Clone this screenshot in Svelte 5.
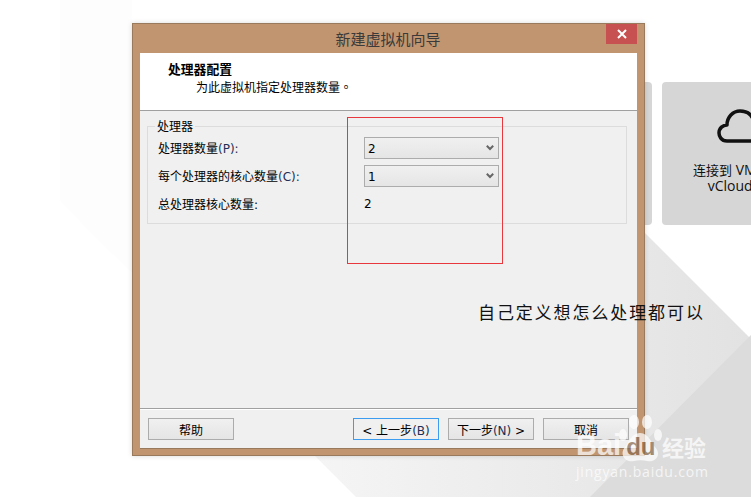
<script>
	let fields = [
		{ label: '处理器数量', key: '(P):', value: '2' },
		{ label: '每个处理器的核心数量', key: '(C):', value: '1' }
	]
</script>

<main class="desktop">
	<svg class="backdrop" width="751" height="497" aria-hidden="true">
		<defs>
			<linearGradient id="fade" x1="0" x2="1" y1="0" y2="0">
				<stop offset="0" stop-color="#f5f5f5" />
				<stop offset="1" stop-color="#e2e2e2" />
			</linearGradient>
		</defs>
		<polygon points="60,0 132,0 132,272 98,240 60,200" fill="#fdfdfd" />
		<polygon points="315,456 645,233 751,339 751,497 356,497" fill="url(#fade)" />
		<polygon points="751,335 751,497 590,497" fill="#dcdcdc" />
	</svg>

	<div class="tile side"></div>
	<div class="tile cloud">
		<svg width="70" height="40" viewBox="0 0 70 40" fill="none" aria-hidden="true">
			<path
				d="M10 33 C4 33 2 28 2 25 C2 20 6 17 10 17 C10 9 16 3 23 3 C29 3 34 6 36 11 C39 9 43 9 46 11 C49 13 50 16 50 18 C55 17 61 20 61 26 C61 30 58 33 54 33 Z"
				stroke="#111"
				stroke-width="3.5"
				stroke-linejoin="round"
			/>
		</svg>
		<p><span class="cjk">连接到</span> VMware<br />vCloud Air</p>
	</div>

	<section class="window">
		<header class="titlebar">
			<h1>新建虚拟机向导</h1>
			<button class="close" aria-label="关闭">
				<svg width="10" height="10" viewBox="0 0 10 10" aria-hidden="true">
					<path d="M1 1 L9 9 M9 1 L1 9" stroke="#fff" stroke-width="2" />
				</svg>
			</button>
		</header>

		<div class="client">
			<div class="intro">
				<h2>处理器配置</h2>
				<p>为此虚拟机指定处理器数量<span class="stop">。</span></p>
			</div>

			<div class="body">
				<fieldset>
					<legend>处理器</legend>
					{#each fields as field}
						<div class="row">
							<span class="label">{field.label}<span class="key">{field.key}</span></span>
							<div class="select">
								<span class="value">{field.value}</span>
								<svg width="8" height="6" viewBox="0 0 8 6" aria-hidden="true">
									<path d="M0.8 0.8 L4 4 L7.2 0.8" fill="none" stroke="#666" stroke-width="2" />
								</svg>
							</div>
						</div>
					{/each}
					<div class="row total">
						<span class="label">总处理器核心数量:</span>
						<span class="count">2</span>
					</div>
				</fieldset>
			</div>

			<footer class="actions">
				<button class="btn help">帮助</button>
				<button class="btn focus">&lt; 上一步<span class="key">(B)</span></button>
				<button class="btn">下一步<span class="key">(N)</span> &gt;</button>
				<button class="btn">取消</button>
			</footer>
		</div>
	</section>

	<div class="marquee"></div>
	<p class="note">自己定义想怎么处理都可以</p>

	<div class="watermark" aria-hidden="true">
		<svg class="paw" width="46" height="50" viewBox="0 0 46 50">
			<ellipse cx="6" cy="20" rx="4" ry="6" />
			<ellipse cx="17" cy="7" rx="5" ry="7" />
			<ellipse cx="30" cy="7" rx="5" ry="7" />
			<ellipse cx="41" cy="20" rx="4" ry="6" />
			<path d="M23 18 C14 18 12 28 8 32 C2 39 8 48 17 46 C21 45 26 45 30 46 C39 48 45 39 38 32 C34 28 32 18 23 18 Z" />
		</svg>
		<span class="brand">Bai<span class="du">du</span></span>
		<span class="jingyan">经验</span>
		<span class="url">jingyan.baidu.com</span>
	</div>
</main>

<style>
	:global(body) {
		margin: 0;
		background: #fff;
	}

	.desktop {
		position: relative;
		width: 751px;
		height: 497px;
		overflow: hidden;
		background: #fff;
		font-family: 'DejaVu Sans', 'Noto Sans CJK SC', sans-serif;
		font-size: 12px;
		color: #000;
	}

	.backdrop {
		position: absolute;
		left: 0;
		top: 0;
	}

	.tile {
		position: absolute;
		top: 82px;
		height: 143px;
		background: #d6d6d6;
		border-radius: 4px;
	}

	.side {
		left: 560px;
		width: 92px;
	}

	.cloud {
		left: 662px;
		width: 158px;
		display: flex;
		flex-direction: column;
		align-items: center;
		padding-top: 26px;
		box-sizing: border-box;
	}

	.cloud svg {
		margin-left: 22px;
	}

	.cloud p {
		margin: 14px 0 0;
		font-family: 'Open Sans', 'Noto Sans CJK SC', sans-serif;
		font-size: 14px;
		line-height: 16px;
		text-align: center;
		white-space: nowrap;
		color: #111;
	}

	.cjk {
		font-size: 13px;
	}

	.window {
		position: absolute;
		left: 132px;
		top: 23px;
		width: 513px;
		height: 433px;
		box-sizing: border-box;
		display: flex;
		flex-direction: column;
		background: #c09570;
		border: 1px solid #9a7a5c;
		box-shadow: 0 0 5px rgba(0, 0, 0, 0.15);
		padding: 0 7px 6px;
	}

	.titlebar {
		height: 29px;
		flex: none;
		display: flex;
		justify-content: center;
		align-items: center;
		position: relative;
	}

	h1 {
		margin: 0 0 0 -1px;
		font-size: 15px;
		font-weight: 400;
		color: #3a3a3a;
	}

	.close {
		position: absolute;
		right: 0;
		top: 0;
		width: 31px;
		height: 20px;
		border: 0;
		padding: 0;
		background: #c75050;
		display: flex;
		align-items: center;
		justify-content: center;
	}

	.client {
		flex: 1;
		display: flex;
		flex-direction: column;
		background: #f0f0f0;
		border-bottom: 1px solid #9a7a5c;
		min-height: 0;
	}

	.intro {
		height: 57px;
		flex: none;
		background: #fff;
		border-bottom: 1px solid #a0a0a0;
		padding-left: 28px;
		display: flex;
		flex-direction: column;
	}

	h2 {
		margin: 8px 0 0;
		font-size: 12.8px;
		line-height: 17px;
		font-weight: 700;
	}

	.intro p {
		margin: 0 0 0 28px;
		font-size: 12px;
		line-height: 17px;
	}

	.stop {
		font-family: 'Noto Sans CJK TC', sans-serif;
	}

	.body {
		flex: 1;
		padding: 7px 10px 0 7px;
	}

	fieldset {
		margin: 0;
		padding: 0 0 0 10px;
		height: 106px;
		box-sizing: border-box;
		border: 1px solid #dcdcdc;
		display: flex;
		flex-direction: column;
	}

	legend {
		margin-left: -3px;
		padding: 0 2px;
		font-size: 12px;
		line-height: 16px;
		position: relative;
		top: 1px;
	}

	.row {
		display: flex;
		align-items: center;
		height: 22px;
		margin-top: 6px;
	}

	.row:first-of-type {
		margin-top: 3px;
	}

	.label {
		width: 206px;
		flex: none;
		margin-top: -2px;
	}

	.key {
		color: #1c2f55;
	}

	.select {
		width: 135px;
		height: 22px;
		box-sizing: border-box;
		border: 1px solid #acacac;
		background: linear-gradient(#f0f0f0, #e5e5e5);
		display: flex;
		align-items: center;
		justify-content: space-between;
		padding: 0 4px 0 3px;
	}

	.value {
		margin-top: 1px;
	}

	.actions {
		flex: none;
		height: 40px;
		box-sizing: border-box;
		border-top: 1px solid #a0a0a0;
		box-shadow: inset 0 1px 0 #fff;
		display: flex;
		align-items: flex-start;
		gap: 9px;
		padding: 9px 0 0 8px;
	}

	.btn {
		width: 86px;
		height: 22px;
		box-sizing: border-box;
		padding: 0;
		border: 1px solid #acacac;
		background: linear-gradient(#f0f0f0, #e5e5e5);
		font: inherit;
		color: #000;
	}

	.help {
		margin-right: 110px;
	}

	.focus {
		border-color: #3c9cf0;
		background: #f0f0f0;
	}

	.marquee {
		position: absolute;
		left: 347px;
		top: 117px;
		width: 156px;
		height: 147px;
		box-sizing: border-box;
		border: 1px solid #e8383d;
	}

	.note {
		position: absolute;
		left: 478px;
		top: 300px;
		margin: 0;
		font-family: 'Noto Sans CJK SC', sans-serif;
		font-size: 17px;
		line-height: 24px;
		letter-spacing: 1.9px;
		white-space: nowrap;
		color: #111;
	}

	.watermark {
		position: absolute;
		left: 576px;
		top: 415px;
		width: 140px;
		height: 70px;
		color: #fff;
		opacity: 0.72;
	}

	.paw {
		position: absolute;
		left: 41px;
		top: 0;
		fill: #fff;
	}

	.brand {
		position: absolute;
		left: 0;
		top: 14px;
		font-family: 'Liberation Sans', sans-serif;
		font-size: 29px;
		line-height: 32px;
		font-weight: 700;
	}

	.du {
		position: relative;
		left: 5px;
		color: #8a6c50;
		font-size: 24px;
	}

	.jingyan {
		position: absolute;
		left: 86px;
		top: 18px;
		font-size: 22px;
		line-height: 26px;
		font-weight: 700;
		font-family: 'Noto Sans CJK SC', sans-serif;
	}

	.url {
		position: absolute;
		left: 0;
		top: 48px;
		font-family: 'Open Sans', sans-serif;
		font-size: 14px;
		line-height: 18px;
		letter-spacing: 0.8px;
		white-space: nowrap;
	}
</style>
